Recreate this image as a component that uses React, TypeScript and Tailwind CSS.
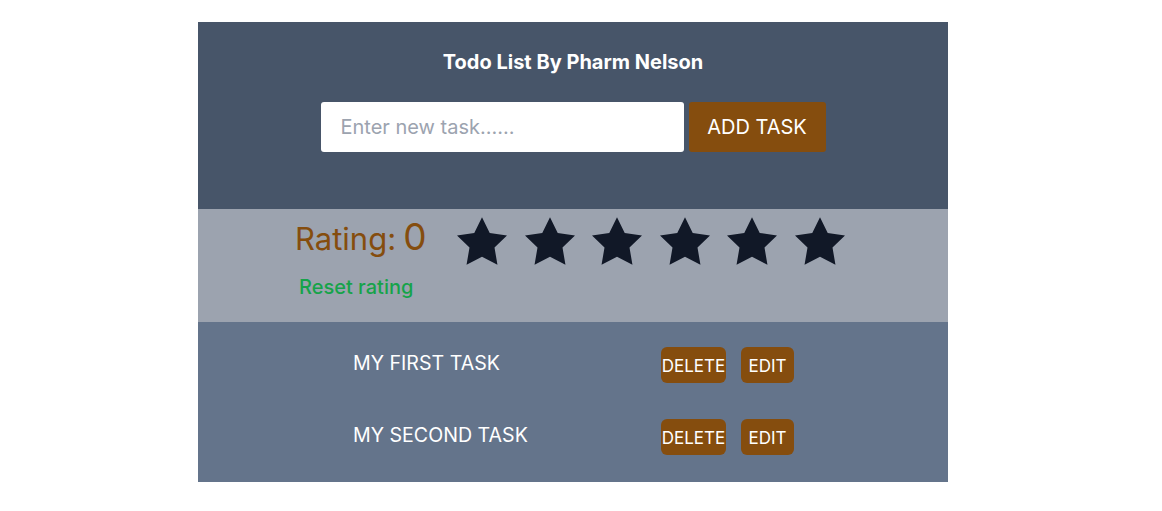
import React, { useState } from 'react';

type Task = { id: number; title: string };

const StarIcon: React.FC = () => (
  <svg viewBox="2 2 20 19.02" className="w-[50px] h-[48px]" fill="#111827">
    <polygon points="12,2 15.09,8.26 22,9.27 17,14.14 18.18,21.02 12,17.77 5.82,21.02 7,14.14 2,9.27 8.91,8.26" />
  </svg>
);

const App: React.FC = () => {
  const [tasks] = useState<Task[]>([
    { id: 1, title: 'MY FIRST TASK' },
    { id: 2, title: 'MY SECOND TASK' },
  ]);
  const [rating, setRating] = useState(0);

  return (
    <div className="min-h-screen bg-white pt-[22px] font-['Inter',sans-serif]">
      <div className="ml-[198px] w-[750px]">
        {/* Header */}
        <header className="bg-[#475569] h-[187px] pt-[26px] flex flex-col items-center">
          <h1 className="text-white font-bold text-[20px] leading-[28px]">
            Todo List By Pharm Nelson
          </h1>
          <form className="mt-[26px] flex gap-[5px]" onSubmit={e => e.preventDefault()}>
            <input
              type="text"
              placeholder="Enter new task......"
              className="w-[363px] h-[50px] bg-white rounded-[3px] px-[20px] text-[20px] text-gray-700 placeholder:text-[#9ca3af] outline-none"
            />
            <button className="w-[137px] h-[50px] bg-[#854d0e] rounded-[3px] text-white text-[20px]">
              ADD TASK
            </button>
          </form>
        </header>

        {/* Rating */}
        <section className="bg-[#9ca3af] h-[113px] pt-[8px] pl-[97px] flex items-start gap-[31px]">
          <div className="flex flex-col">
            <div className="flex items-baseline gap-[7px] text-[#854d0e] leading-[40px]">
              <span className="text-[31px]">Rating:</span>
              <span className="text-[37px]">{rating}</span>
            </div>
            <button
              onClick={() => setRating(0)}
              className="mt-[14px] ml-[4px] text-left text-[20px] leading-[28px] font-medium text-[#16a34a]"
            >
              Reset rating
            </button>
          </div>
          <div className="flex gap-[17.5px]">
            {[1, 2, 3, 4, 5, 6].map(n => (
              <button key={n} onClick={() => setRating(n)}>
                <StarIcon />
              </button>
            ))}
          </div>
        </section>

        {/* Tasks */}
        <section className="bg-[#64748b] pt-[25px] pb-[27px] flex flex-col gap-[36px]">
          {tasks.map(task => (
            <div key={task.id} className="flex items-start">
              <span className="ml-[155px] mt-[2px] w-[308px] text-white text-[19.6px] leading-[28px]">{task.title}</span>
              <div className="flex gap-[15px]">
                <button className="w-[65px] h-[36px] pt-[3px] bg-[#854d0e] rounded-md text-white text-[17px] whitespace-nowrap flex items-center justify-center">
                  DELETE
                </button>
                <button className="w-[53px] h-[36px] pt-[3px] bg-[#854d0e] rounded-md text-white text-[17px] flex items-center justify-center">
                  EDIT
                </button>
              </div>
            </div>
          ))}
        </section>
      </div>
    </div>
  );
};

export default App;
